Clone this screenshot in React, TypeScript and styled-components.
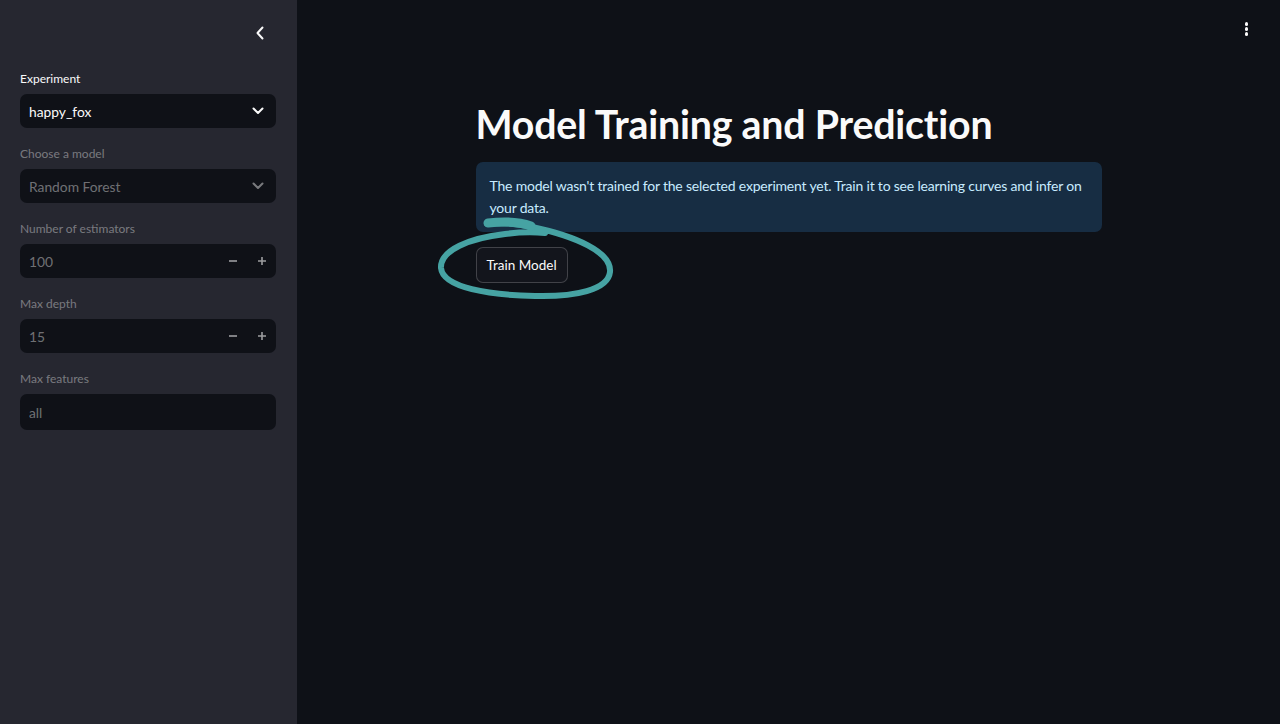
import React from "react";
import styled, { createGlobalStyle } from "styled-components";

const GlobalStyle = createGlobalStyle`
  html, body { margin: 0; padding: 0; background: #0e1117; }
  body { font-family: "Source Sans Pro", Lato, "Noto Sans", sans-serif; color: #fafafa; }
  * { box-sizing: border-box; }
`;

const Shell = styled.div`
  display: flex;
  width: 1280px;
  height: 724px;
  overflow: hidden;
`;

const Sidebar = styled.aside`
  width: 297px;
  flex: none;
  background: #262730;
  display: flex;
  flex-direction: column;
`;

const SidebarHeader = styled.div`
  height: 66px;
  display: flex;
  align-items: center;
  justify-content: flex-end;
  padding-right: 28px;
`;

const IconButton = styled.button`
  width: 18px;
  height: 18px;
  padding: 0;
  border: none;
  background: transparent;
  color: #fafafa;
  display: flex;
  align-items: center;
  justify-content: center;
  cursor: pointer;
`;

const Fields = styled.div`
  display: flex;
  flex-direction: column;
  gap: 16px;
  padding: 3px 21px 0 20px;
`;

const Field = styled.div`
  display: flex;
  flex-direction: column;
  gap: 5px;
`;

const Label = styled.label<{ $disabled?: boolean }>`
  font-size: 12px;
  line-height: 20px;
  height: 20px;
  color: ${(p) => (p.$disabled ? "rgba(250,250,250,0.4)" : "#fafafa")};
`;

const Control = styled.div<{ $tall?: boolean }>`
  height: ${(p) => (p.$tall ? "36px" : "34px")};
  background: #0f1117;
  border-radius: 7px;
  display: flex;
  align-items: center;
  padding: 0 0 0 9px;
`;

const Value = styled.span<{ $disabled?: boolean }>`
  flex: 1;
  font-size: 13.8px;
  color: ${(p) => (p.$disabled ? "rgba(250,250,250,0.42)" : "#fafafa")};
`;

const SelectArrow = styled.span<{ $disabled?: boolean }>`
  width: 36px;
  display: flex;
  justify-content: center;
  color: ${(p) => (p.$disabled ? "rgba(250,250,250,0.45)" : "#fafafa")};
`;

const Stepper = styled.div`
  display: flex;
  align-items: center;
`;

const StepButton = styled.span`
  width: 29px;
  height: 34px;
  display: flex;
  align-items: center;
  justify-content: center;
  color: rgba(250, 250, 250, 0.6);
`;

const Main = styled.main`
  flex: 1;
  display: flex;
  flex-direction: column;
`;

const Toolbar = styled.div`
  height: 58px;
  display: flex;
  align-items: center;
  justify-content: flex-end;
  padding-right: 32px;
`;

const Kebab = styled.div`
  display: flex;
  flex-direction: column;
  gap: 1.5px;
  span {
    width: 3.5px;
    height: 3.5px;
    border-radius: 50%;
    background: #fafafa;
  }
`;

const Content = styled.div`
  width: 626px;
  margin: 0 auto;
  display: flex;
  flex-direction: column;
`;

const Title = styled.h1`
  margin: 40px 0 0;
  font-size: 39.3px;
  font-weight: 700;
  line-height: 52px;
  color: #fafafa;
  letter-spacing: -0.2px;
`;

const Info = styled.div`
  margin-top: 12px;
  background: #172d43;
  border-radius: 7px;
  padding: 13px 14px;
  color: #c7ebff;
  font-size: 14px;
  letter-spacing: -0.2px;
  line-height: 22px;
`;

const ButtonWrap = styled.div`
  position: relative;
  align-self: flex-start;
  margin-top: 15px;
`;

const Button = styled.button`
  position: relative;
  z-index: 1;
  height: 36px;
  padding: 0 10px;
  background: #13151c;
  color: #fafafa;
  border: 1px solid rgba(250, 250, 250, 0.2);
  border-radius: 7px;
  font-family: inherit;
  font-size: 13.5px;
`;

const Scribble = styled.svg`
  position: absolute;
  left: -40px;
  top: -30px;
  width: 180px;
  height: 84px;
  z-index: 2;
  pointer-events: none;
`;

const ChevronDown = () => (
  <svg width="12" height="8" viewBox="0 0 12 8" fill="none">
    <path d="M1.5 1.5 L6 6 L10.5 1.5" stroke="currentColor" strokeWidth="2" strokeLinecap="round" strokeLinejoin="round" />
  </svg>
);

const Minus = () => (
  <svg width="10" height="10" viewBox="0 0 10 10">
    <path d="M1 5 H9" stroke="currentColor" strokeWidth="1.6" />
  </svg>
);

const Plus = () => (
  <svg width="10" height="10" viewBox="0 0 10 10">
    <path d="M1 5 H9 M5 1 V9" stroke="currentColor" strokeWidth="1.6" />
  </svg>
);

const SelectField = ({ label, value, disabled }: { label: string; value: string; disabled?: boolean }) => (
  <Field>
    <Label $disabled={disabled}>{label}</Label>
    <Control>
      <Value $disabled={disabled}>{value}</Value>
      <SelectArrow $disabled={disabled}>
        <ChevronDown />
      </SelectArrow>
    </Control>
  </Field>
);

const NumberField = ({ label, value }: { label: string; value: string }) => (
  <Field>
    <Label $disabled>{label}</Label>
    <Control>
      <Value $disabled>{value}</Value>
      <Stepper>
        <StepButton>
          <Minus />
        </StepButton>
        <StepButton>
          <Plus />
        </StepButton>
      </Stepper>
    </Control>
  </Field>
);

export default function App() {
  return (
    <>
      <GlobalStyle />
      <Shell>
        <Sidebar>
          <SidebarHeader>
            <IconButton aria-label="Collapse sidebar">
              <svg width="10" height="14" viewBox="0 0 10 14" fill="none">
                <path d="M7.5 1.5 L2.5 7 L7.5 12.5" stroke="currentColor" strokeWidth="2" strokeLinecap="round" strokeLinejoin="round" />
              </svg>
            </IconButton>
          </SidebarHeader>
          <Fields>
            <SelectField label="Experiment" value="happy_fox" />
            <SelectField label="Choose a model" value="Random Forest" disabled />
            <NumberField label="Number of estimators" value="100" />
            <NumberField label="Max depth" value="15" />
            <Field>
              <Label $disabled>Max features</Label>
              <Control $tall>
                <Value $disabled>all</Value>
              </Control>
            </Field>
          </Fields>
        </Sidebar>
        <Main>
          <Toolbar>
            <Kebab>
              <span />
              <span />
              <span />
            </Kebab>
          </Toolbar>
          <Content>
            <Title>Model Training and Prediction</Title>
            <Info>
              The model wasn't trained for the selected experiment yet. Train it to see learning curves and infer on your data.
            </Info>
            <ButtonWrap>
              <Button>Train Model</Button>
              <Scribble viewBox="436 217 180 84" fill="none">
                <path
                  d="M487 224 C505 222 520 224 532 227 C575 236 612 252 610 272 C608 290 575 297 535 296 C490 295 443 288 441 268 C440 250 470 238 505 234 C520 232 535 232 545 233"
                  stroke="#46a3a3"
                  strokeWidth="6"
                  strokeLinecap="round"
                  strokeLinejoin="round"
                />
                <path d="M488 223 C505 221 520 222 531 226" stroke="#46a3a3" strokeWidth="9" strokeLinecap="round" />
              </Scribble>
            </ButtonWrap>
          </Content>
        </Main>
      </Shell>
    </>
  );
}
